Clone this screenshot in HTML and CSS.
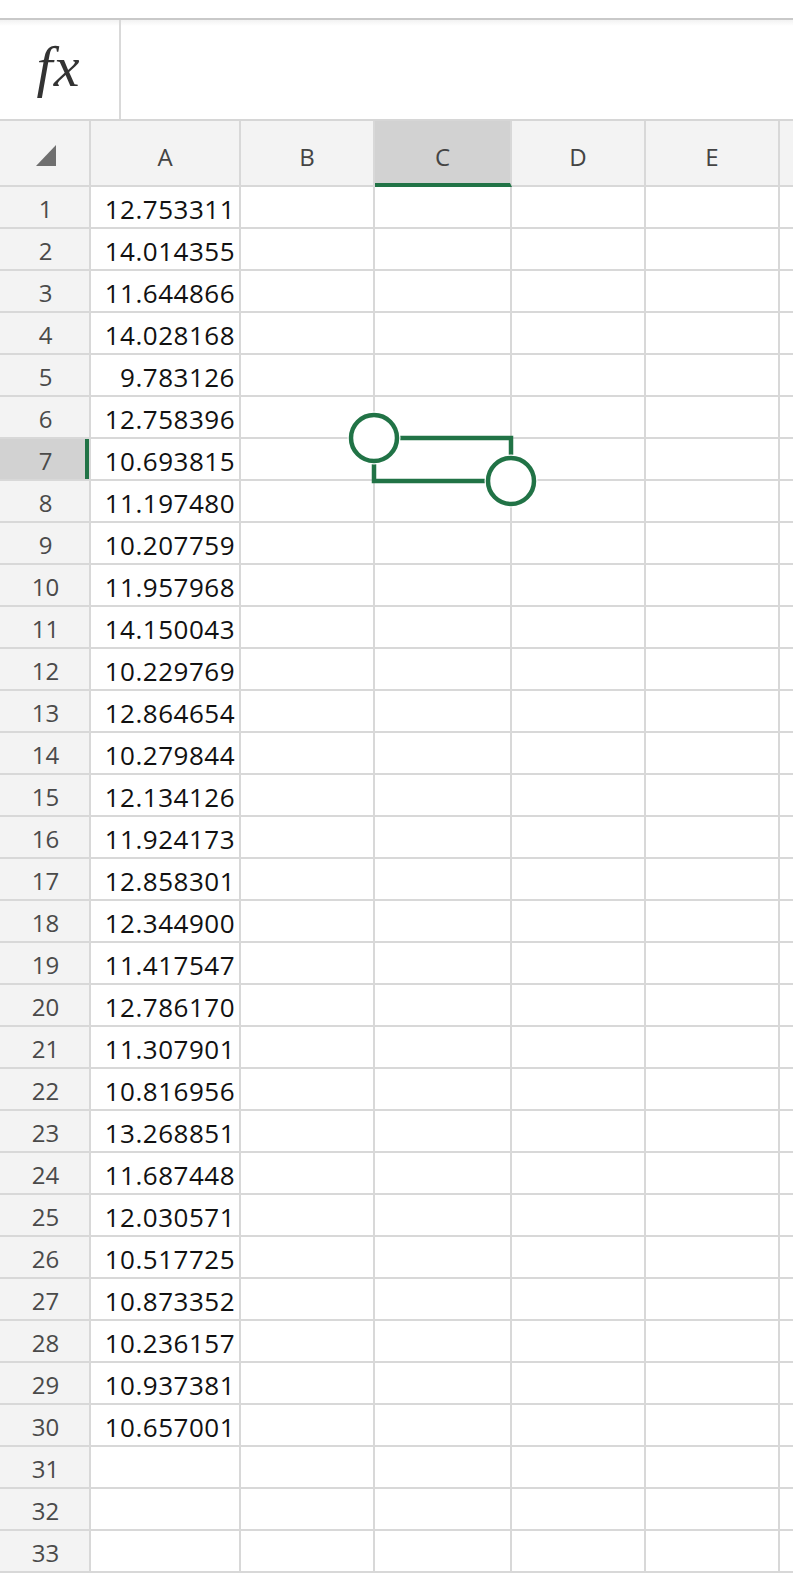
FILE: index.html
```html
<!DOCTYPE html>
<html lang="en">
<head>
<meta charset="utf-8">
<title>Sheet</title>
<link rel="stylesheet" href="styles.css">
</head>
<body>
<div class="topbar"></div>
<div class="formula">
  <div class="fx"><span>fx</span></div>
  <div class="formula-input"></div>
</div>
<div class="grid" id="grid">
  <div class="corner"><svg width="20" height="21" viewBox="0 0 20 21"><polygon points="20,0 20,21 0,21" fill="#6f6f6f"/></svg></div>
  <div class="colhead">A</div>
  <div class="colhead">B</div>
  <div class="colhead selected">C</div>
  <div class="colhead">D</div>
  <div class="colhead">E</div>
  <div class="colhead last"></div>
</div>
<script>
(function(){
  var vals = ["12.753311","14.014355","11.644866","14.028168","9.783126","12.758396","10.693815","11.197480","10.207759","11.957968","14.150043","10.229769","12.864654","10.279844","12.134126","11.924173","12.858301","12.344900","11.417547","12.786170","11.307901","10.816956","13.268851","11.687448","12.030571","10.517725","10.873352","10.236157","10.937381","10.657001"];
  var g = document.getElementById('grid');
  var html = '';
  for (var r = 1; r <= 33; r++) {
    html += '<div class="rowhead' + (r === 7 ? ' selected' : '') + '">' + r + '</div>';
    html += '<div class="cell num">' + (vals[r-1] || '') + '</div>';
    html += '<div class="cell"></div><div class="cell"></div><div class="cell"></div><div class="cell"></div><div class="cell last"></div>';
  }
  g.insertAdjacentHTML('beforeend', html);
  g.insertAdjacentHTML('beforeend',
    '<svg class="selection" width="793" height="1460" viewBox="0 0 793 1460">' +
    '<rect x="374" y="317" width="137" height="43" fill="none" stroke="#217346" stroke-width="4.5"/>' +
    '<circle cx="374" cy="317" r="26.5" fill="#fff"/>' +
    '<circle cx="374" cy="317" r="23" fill="#fff" stroke="#217346" stroke-width="4.5"/>' +
    '<circle cx="511" cy="360" r="26.5" fill="#fff"/>' +
    '<circle cx="511" cy="360" r="23" fill="#fff" stroke="#217346" stroke-width="4.5"/>' +
    '</svg>');
})();
</script>
</body>
</html>
```
FILE: styles.css
```css
html, body {
  margin: 0;
  padding: 0;
  background: #fff;
}
body {
  width: 793px;
  height: 1575px;
  overflow: hidden;
  font-family: "Open Sans", "Noto Sans", sans-serif;
}
.topbar {
  height: 18px;
  border-bottom: 2px solid #c9c9c9;
}
.formula {
  display: flex;
  height: 99px;
  border-bottom: 2px solid #d6d6d6;
  background: linear-gradient(#f2f2f2, #fff 6px);
}
.fx {
  width: 119px;
  border-right: 2px solid #d9d9d9;
  display: flex;
  align-items: center;
  justify-content: center;
}
.fx span {
  font-family: "Liberation Serif", "Times New Roman", serif;
  font-style: italic;
  font-weight: 400;
  font-size: 58px;
  color: #333;
  letter-spacing: 1px;
  margin-top: -6px;
  margin-left: -2px;
}
.formula-input {
  flex: 1;
}
.grid {
  position: relative;
  display: grid;
  grid-template-columns: 91px 150px 134px 137px 134px 134px 13px;
  grid-template-rows: 66px repeat(33, 42px);
}
.grid > div {
  box-sizing: border-box;
  border-right: 2px solid #d8d8d8;
  border-bottom: 2px solid #d8d8d8;
}
.grid > div.last {
  border-right: none;
}
.corner {
  background: #f3f3f3;
  display: flex;
  align-items: flex-end;
  justify-content: flex-end;
  padding: 0 33px 19px 0;
}
.corner svg {
  display: block;
}
.colhead {
  background: #f3f3f3;
  display: flex;
  align-items: center;
  justify-content: center;
  font-size: 24px;
  font-weight: 400;
  color: #444;
  padding-top: 6px;
}
.grid > .colhead.selected {
  background: #d2d2d2;
  border-bottom: 4px solid #217346;
  padding-top: 8px;
}
.rowhead {
  background: #f3f3f3;
  display: flex;
  align-items: center;
  justify-content: center;
  font-size: 24px;
  font-weight: 400;
  color: #4a4a4a;
  padding-top: 3px;
  padding-left: 2px;
}
.rowhead.selected {
  background: #d2d2d2;
  box-shadow: inset -4px 0 0 #217346;
}
.cell {
  background: #fff;
}
.cell.num {
  display: flex;
  align-items: center;
  justify-content: flex-end;
  padding-right: 4px;
  padding-top: 4px;
  font-size: 26px;
  color: #111;
  letter-spacing: 0.5px;
}
.selection {
  position: absolute;
  left: 0;
  top: 0;
  pointer-events: none;
}
```
